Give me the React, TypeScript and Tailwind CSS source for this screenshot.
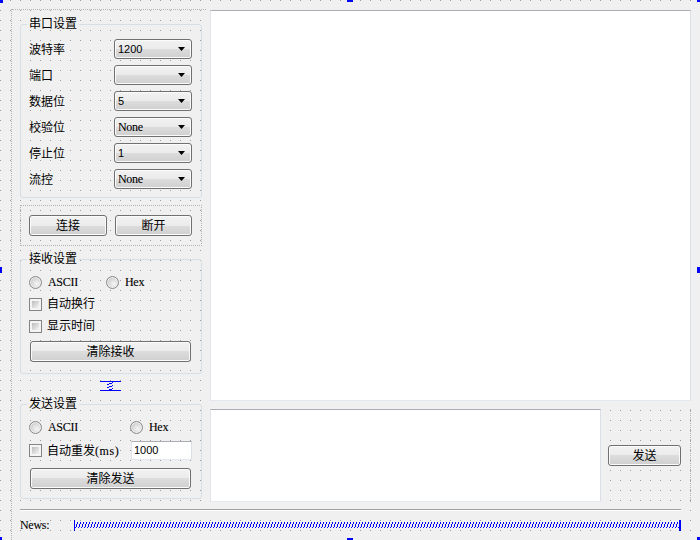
import React from "react";

const BTNBASE =
  "flex items-center rounded-[3px] border border-[#707070] bg-[linear-gradient(#f2f2f2_0%,#ebebeb_50%,#dddddd_50%,#cfcfcf_100%)] shadow-[inset_0_0_0_1px_#fbfbfb]";
const EDIT =
  "bg-white border-t border-l border-r border-b border-t-[#abadb3] border-l-[#e2e3ea] border-r-[#dbdfe6] border-b-[#e3e9ef]";
const MONO =
  "font-['Liberation_Serif',serif] font-normal text-[12px] tracking-[-0.3px] [-webkit-text-stroke:0.1px_#000]";

function Combo({ value, mono }: { value: string; mono?: boolean }) {
  return (
    <div className={`${BTNBASE} justify-between w-[78px] h-[20px] pl-[3px] pr-[6px]`}>
      <span className={mono ? MONO : "text-[11px] font-['Liberation_Sans',sans-serif]"}>{value}</span>
      <svg width="7" height="4" viewBox="0 0 7 4" className="block">
        <path d="M0 0H7L3.5 4Z" fill="#000" />
      </svg>
    </div>
  );
}

function Button({ label, className }: { label: string; className: string }) {
  return <div className={`${BTNBASE} justify-center ${className}`}>{label}</div>;
}

function Radio() {
  return (
    <div className="w-[13px] h-[13px] shrink-0 rounded-full border border-[#8a8a8a] bg-[radial-gradient(circle_at_62%_62%,#f6f6f6_0%,#dcdcdc_45%,#b8b8b8_100%)] shadow-[inset_0_0_0_1px_#eeeeee]" />
  );
}

function Check() {
  return (
    <div className="w-[13px] h-[13px] shrink-0 border border-[#848484] bg-[#f4f4f4] p-[2px]">
      <div className="w-full h-full bg-[linear-gradient(135deg,#bcbcbc,#f4f4f4)]" />
    </div>
  );
}

function Group({ title, children }: { title: string; children: React.ReactNode }) {
  return (
    <fieldset className="w-[182px] border border-[#d5dfe5] rounded-[3px] px-[6px]">
      <legend className="px-[2px] text-[12px] leading-[14px]">{title}</legend>
      {children}
    </fieldset>
  );
}

function HSpring({ w, h }: { w: number; h: number }) {
  const base = Math.floor(h / 2);
  let d = "";
  for (let i = 0; i < Math.floor(w / 3) + 1; i++) {
    const x = i * 3;
    d += `M${x + 1.5} ${base + 3.5}L${x + 3.5} ${base - 2.5}`;
  }
  return (
    <svg width={w} height={h} className="block" shapeRendering="crispEdges">
      <path d={d} stroke="#0000ff" strokeWidth="1" fill="none" />
      <rect x="0" y="0" width="1" height={h} fill="#0000ff" />
      <rect x={w - 2} y="0" width="2" height={h} fill="#0000ff" />
    </svg>
  );
}

function VSpring() {
  const w = 21;
  const h = 10;
  const base = 10;
  let d = "";
  for (let i = 0; i < 3; i++) {
    const y = i * 3;
    d += `M${base + 3.5} ${y + 1.5}L${base - 2.5} ${y + 3.5}`;
  }
  return (
    <svg width={w} height={h} className="block" shapeRendering="crispEdges">
      <rect x="0" y="0" width={w} height="1" fill="#0000ff" />
      <rect x="0" y={h - 1} width={w} height="1" fill="#0000ff" />
      <path d={d} stroke="#0000ff" strokeWidth="1" fill="none" />
    </svg>
  );
}

const rows: { label: string; value: string; mono?: boolean }[] = [
  { label: "波特率", value: "1200" },
  { label: "端口", value: "" },
  { label: "数据位", value: "5" },
  { label: "校验位", value: "None", mono: true },
  { label: "停止位", value: "1" },
  { label: "流控", value: "None", mono: true },
];

export default function App() {
  return (
    <div className="relative w-[700px] h-[540px] overflow-hidden bg-[#f0f0f0] bg-[conic-gradient(at_1px_1px,transparent_75%,#9c9c9c_0)] bg-size-[10px_10px] font-['Liberation_Sans','Noto_Sans_CJK_SC',sans-serif] text-[12px] text-black">
      <div className="ml-[11px] mt-[9px] w-[680px] h-[531px] border-l border-dotted border-[#b4b4b4] flex flex-col">
        {/* top area */}
        <div className="flex flex-row h-[500px]">
          {/* left column */}
          <div className="w-[194px] h-[500px] border-t border-dotted border-[#b4b4b4] pl-[8px] flex flex-col">
            <div className="mt-[7px]">
              <Group title="串口设置">
                <div className="pl-[2px] pr-[3px] pt-[8px] pb-[8px] flex flex-col gap-[6px]">
                  {rows.map((r) => (
                    <div key={r.label} className="flex items-center h-[20px]">
                      <span className="w-[85px] leading-[14px] pt-[1px]">{r.label}</span>
                      <Combo value={r.value} mono={r.mono} />
                    </div>
                  ))}
                </div>
              </Group>
            </div>

            <div className="mt-[7px] w-[182px] h-[41px] border border-dotted border-[#b4b4b4] pt-[9px] pl-[8px] flex gap-[8px]">
              <Button label="连接" className="w-[78px] h-[21px]" />
              <Button label="断开" className="w-[77px] h-[21px]" />
            </div>

            <div className="mt-[6px]">
              <Group title="接收设置">
                <div className="pl-[2px] pr-[3px] pt-[9px] pb-[11px] flex flex-col">
                  <div className="flex items-center h-[14px]">
                    <div className="flex items-center gap-[6px] w-[77px]">
                      <Radio />
                      <span className={MONO}>ASCII</span>
                    </div>
                    <div className="flex items-center gap-[6px]">
                      <Radio />
                      <span className={MONO}>Hex</span>
                    </div>
                  </div>
                  <div className="mt-[8px] flex items-center gap-[5px] h-[14px]">
                    <Check />
                    <span className="leading-[14px]">自动换行</span>
                  </div>
                  <div className="mt-[8px] flex items-center gap-[5px] h-[14px]">
                    <Check />
                    <span className="leading-[14px]">显示时间</span>
                  </div>
                  <Button label="清除接收" className="mt-[8px] ml-[1px] w-[161px] h-[21px]" />
                </div>
              </Group>
            </div>

            <div className="mt-[7px] ml-[80px]">
              <VSpring />
            </div>

            <div className="mt-[6px]">
              <Group title="发送设置">
                <div className="pl-[2px] pr-[3px] pt-[9px] pb-[9px] flex flex-col">
                  <div className="flex items-center h-[14px]">
                    <div className="flex items-center gap-[6px] w-[101px]">
                      <Radio />
                      <span className={MONO}>ASCII</span>
                    </div>
                    <div className="flex items-center gap-[6px]">
                      <Radio />
                      <span className={MONO}>Hex</span>
                    </div>
                  </div>
                  <div className="mt-[7px] flex items-center h-[19px]">
                    <div className="flex items-center gap-[5px]">
                      <Check />
                      <span className="leading-[14px]">
                        自动重发<span className={`${MONO} tracking-[0.6px]`}>(ms)</span>
                      </span>
                    </div>
                    <div className={`${EDIT} ml-auto w-[61px] h-[19px] flex items-center pl-[2px] text-[11px] font-['Liberation_Sans',sans-serif]`}>
                      1000
                    </div>
                  </div>
                  <Button label="清除发送" className="mt-[8px] ml-[1px] w-[161px] h-[21px]" />
                </div>
              </Group>
            </div>
          </div>

          {/* right column */}
          <div className="ml-[4px] pt-[1px] flex flex-col">
            <div className={`${EDIT} w-[481px] h-[391px]`} />
            <div className="mt-[8px] w-[481px] h-[93px] flex items-center border-r border-dotted border-[#b4b4b4]">
              <div className={`${EDIT} w-[391px] h-[93px]`} />
              <Button label="发送" className="ml-[7px] w-[73px] h-[21px]" />
            </div>
          </div>
        </div>

        {/* separator line */}
        <div className="ml-[8px] w-[661px] h-[2px] border-t border-b border-t-[#a0a0a0] border-b-white" />

        {/* news row */}
        <div className="mt-[9px] h-[11px] flex items-center">
          <span className={`${MONO} ml-[8px] w-[54px] leading-[11px]`}>News:</span>
          <HSpring w={607} h={11} />
        </div>
      </div>

      {/* selection handles */}
      <div className="absolute left-[-3px] top-[-3px] w-[6px] h-[6px] bg-[#0000ff]" />
      <div className="absolute left-[347px] top-[-3px] w-[6px] h-[5px] bg-[#0000ff]" />
      <div className="absolute left-[697px] top-[-3px] w-[6px] h-[5px] bg-[#0000ff]" />
      <div className="absolute left-[-3px] top-[267px] w-[5px] h-[6px] bg-[#0000ff]" />
      <div className="absolute left-[697px] top-[267px] w-[6px] h-[6px] bg-[#0000ff]" />
      <div className="absolute left-[-3px] top-[537px] w-[5px] h-[6px] bg-[#0000ff]" />
      <div className="absolute left-[347px] top-[538px] w-[6px] h-[6px] bg-[#0000ff]" />
      <div className="absolute left-[697px] top-[537px] w-[6px] h-[6px] bg-[#0000ff]" />
    </div>
  );
}
